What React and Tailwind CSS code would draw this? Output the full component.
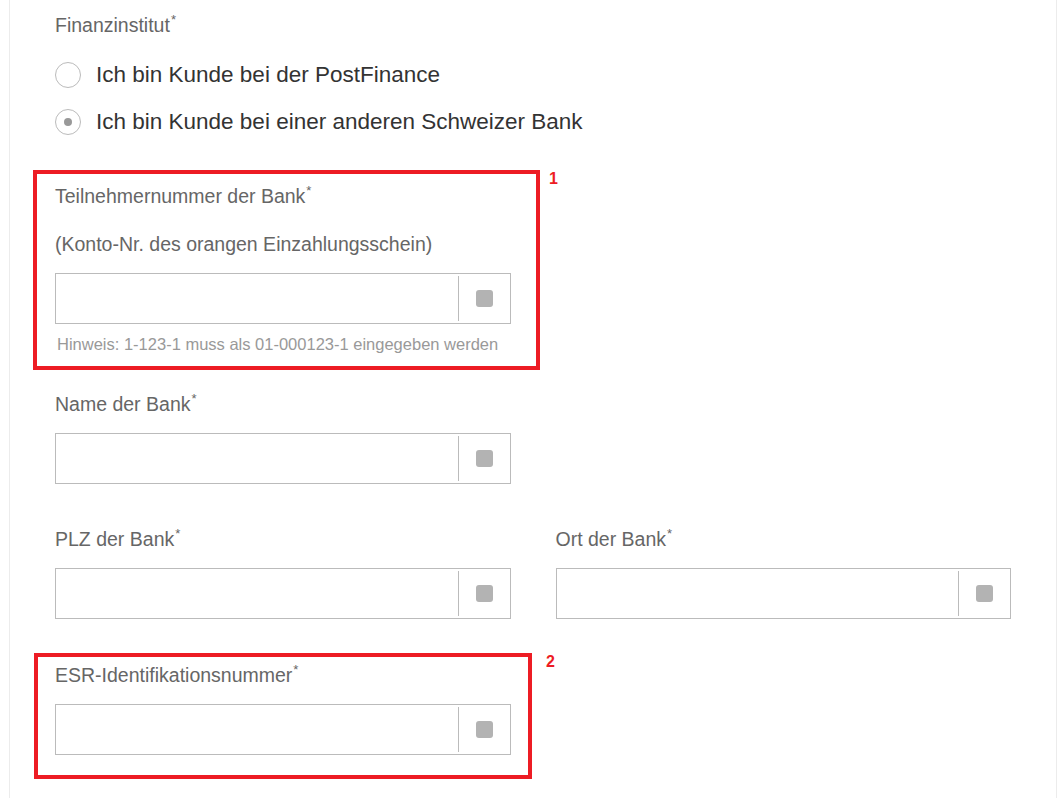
import React from 'react';

const Req = () => <sup className="text-[13px] text-[#666] top-[-0.65em] ml-[1px]">*</sup>;

const Label = ({ children, className = '' }) => (
  <div className={`text-[19.5px] leading-[24px] text-[#666] ${className}`}>
    {children}
    <Req />
  </div>
);

const Field = ({ className = '' }) => (
  <div className={`flex h-[51px] border border-[#bbb] bg-white ${className}`}>
    <div className="flex-1" />
    <div className="w-[52px] border-l border-[#bbb] my-[2px] flex items-center justify-center">
      <span className="w-[17px] h-[17px] rounded-[3px] bg-[#b3b3b3]" />
    </div>
  </div>
);

const Radio = ({ checked, children, className = '' }) => (
  <label className={`flex items-center gap-[15px] h-[26px] ${className}`}>
    <span className="w-[26px] h-[26px] rounded-full border border-[#bbb] flex items-center justify-center shrink-0">
      {checked && <span className="w-[8px] h-[8px] rounded-full bg-[#999]" />}
    </span>
    <span className="text-[22.5px] leading-[26px] text-[#333]">{children}</span>
  </label>
);

export default function App() {
  return (
    <div className="w-full h-[798px] overflow-hidden bg-white font-[family-name:'Liberation_Sans',Arial,sans-serif]">
      <div className="relative ml-[9px] mr-[5px] h-full border-x border-[#ececec] px-[45px] pt-[13px]">
        <Label>Finanzinstitut</Label>

        <div className="mt-[25px] flex flex-col gap-[21px]">
          <Radio>Ich bin Kunde bei der PostFinance</Radio>
          <Radio checked>Ich bin Kunde bei einer anderen Schweizer Bank</Radio>
        </div>

        <div className="w-[456px]">
          <Label className="mt-[49px]">Teilnehmernummer der Bank</Label>
          <div className="mt-[24px] text-[19.5px] leading-[24px] text-[#666]">
            (Konto-Nr. des orangen Einzahlungsschein)
          </div>
          <Field className="mt-[17px]" />
          <div className="mt-[10px] pl-[2px] text-[16.5px] leading-[20px] text-[#999] whitespace-nowrap">
            Hinweis: 1-123-1 muss als 01-000123-1 eingegeben werden
          </div>

          <Label className="mt-[38px]">Name der Bank</Label>
          <Field className="mt-[17px]" />
        </div>

        <div className="grid grid-cols-2 gap-[45px]">
          <div>
            <Label className="mt-[43px]">PLZ der Bank</Label>
            <Field className="mt-[17px]" />
          </div>
          <div>
            <Label className="mt-[43px]">Ort der Bank</Label>
            <Field className="mt-[17px]" />
          </div>
        </div>

        <div className="w-[456px]">
          <Label className="mt-[44px]">ESR-Identifikationsnummer</Label>
          <Field className="mt-[17px]" />
        </div>

        {/* Annotations */}
        <div className="absolute left-[23px] top-[170px] w-[507px] h-[200px] border-[4px] border-[#ed1c24] pointer-events-none" />
        <span className="absolute left-[539px] top-[169px] text-[16px] font-bold text-[#ed1c24] leading-[20px]">1</span>
        <div className="absolute left-[24px] top-[653px] w-[498px] h-[126px] border-[4px] border-[#ed1c24] pointer-events-none" />
        <span className="absolute left-[536px] top-[652px] text-[16px] font-bold text-[#ed1c24] leading-[20px]">2</span>
      </div>
    </div>
  );
}
